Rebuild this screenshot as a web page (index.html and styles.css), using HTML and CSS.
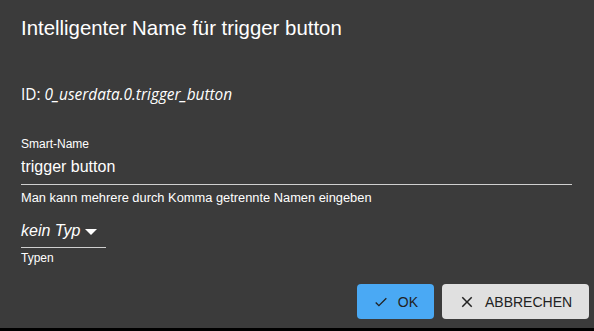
FILE: index.html
```html
<!DOCTYPE html>
<html>
<head>
<meta charset="utf-8">
<link rel="stylesheet" href="styles.css">
</head>
<body>
<div class="dialog">
  <h1 class="title">Intelligenter Name für trigger button</h1>
  <div class="content">
    <div class="id">ID: <i>0_userdata.0.trigger_button</i></div>
    <div class="field">
      <label class="label">Smart-Name</label>
      <div class="input">trigger button</div>
      <div class="helper">Man kann mehrere durch Komma getrennte Namen eingeben</div>
    </div>
    <div class="select-field">
      <div class="select"><span class="sel-text">kein Typ</span><svg class="arrow" width="12" height="6" viewBox="0 0 12 6"><path d="M0 0h12L6 6z" fill="#fff"/></svg></div>
      <div class="helper small">Typen</div>
    </div>
  </div>
  <div class="actions">
    <button class="btn ok"><svg width="18" height="18" viewBox="0 0 24 24"><path d="M9 16.17 4.83 12l-1.42 1.41L9 19 21 7l-1.41-1.41z" fill="#222"/></svg>OK</button>
    <button class="btn cancel"><svg width="18" height="18" viewBox="0 0 24 24"><path d="M19 6.41 17.59 5 12 10.59 6.41 5 5 6.41 10.59 12 5 17.59 6.41 19 12 13.41 17.59 19 19 17.59 13.41 12z" fill="#222"/></svg>ABBRECHEN</button>
  </div>
</div>
</body>
</html>
```

FILE: styles.css
```css
html, body {
  margin: 0;
  padding: 0;
  background: #000;
  height: 100%;
}
.dialog {
  background: #3b3b3b;
  height: 328px;
  color: #fff;
  font-family: "Liberation Sans", Arial, sans-serif;
  box-sizing: border-box;
  display: flex;
  flex-direction: column;
}
.title {
  margin: 0;
  padding: 16px 21px 0;
  font-size: 20.4px;
  font-weight: normal;
  line-height: 24px;
}
.content {
  padding: 0 22px 0 21px;
  flex: 1;
}
.id {
  margin-top: 45px;
  font-family: "Open Sans", sans-serif;
  font-size: 15.4px;
  line-height: 20px;
}
.id i {
  font-style: italic;
}
.field {
  margin-top: 32px;
}
.label {
  display: block;
  font-size: 12px;
  line-height: 14px;
}
.input {
  font-size: 16px;
  line-height: 20px;
  margin-top: 6px;
  padding-bottom: 7px;
  border-bottom: 1px solid #cfcfcf;
}
.helper {
  font-size: 12.85px;
  line-height: 15px;
  margin-top: 5px;
}
.select-field {
  margin-top: 16px;
  display: inline-block;
}
.select {
  display: flex;
  align-items: center;
  gap: 5px;
  width: 85px;
  box-sizing: border-box;
  border-bottom: 1px solid #cfcfcf;
  padding-bottom: 6px;
}
.sel-text {
  font-size: 16px;
  font-style: italic;
  line-height: 20px;
}
.arrow {
  margin-top: 1px;
}
.helper.small {
  font-size: 12px;
  line-height: 14px;
  margin-top: 3px;
}
.actions {
  display: flex;
  justify-content: flex-end;
  gap: 8px;
  padding: 0 5px 9px 0;
}
.btn {
  height: 35px;
  border: none;
  border-radius: 4px;
  font-family: "Liberation Sans", Arial, sans-serif;
  font-size: 14px;
  color: #222;
  display: flex;
  align-items: center;
  gap: 9px;
  padding: 0 16px;
}
.ok {
  background: #4aa9f4;
  width: 77px;
}
.cancel {
  background: #e0e0e0;
  width: 147px;
}
```
